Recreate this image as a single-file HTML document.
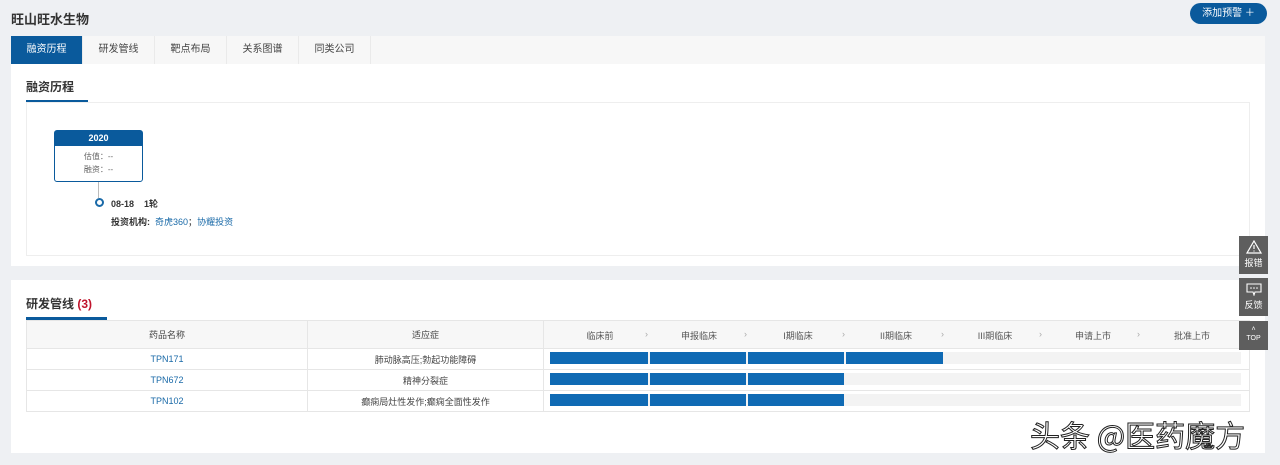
<!DOCTYPE html>
<html><head><meta charset="utf-8"><style>
*{margin:0;padding:0;box-sizing:border-box}
body{width:1280px;height:465px;background:#eef0f3;font-family:"Liberation Sans","Noto Sans CJK SC",sans-serif;font-size:10px;color:#333;position:relative;overflow:hidden}
.abs{position:absolute}
.title{left:11px;top:9px;font-size:13px;font-weight:bold;color:#333}
.card1{left:11px;top:36px;width:1254px;height:230px;background:#fff}
.tabs{left:11px;top:36px;width:1254px;height:28px;background:#f7f7f7;display:flex}
.tab{width:72px;height:28px;line-height:28px;text-align:center;font-size:10px;color:#444;border-right:1px solid #eaeaea}
.tab.on{background:#0a5a9c;color:#fff}
.sect{font-size:12px;font-weight:bold;color:#333}
.ul{height:3px;background:#0a5a9c}
.box{border:1px solid #eee}
table{border-collapse:collapse;position:absolute;left:26px;top:320px;width:1224px}
td,th{border:1px solid #e6e6e6;text-align:center;font-weight:normal;font-size:9px;color:#444}
th{height:28px;background:#f7f7f7}
td{height:21px}
a{color:#1a6aa8;text-decoration:none}
.side{left:1239px;width:29px;background:#5e5e5e;color:#fff;font-size:9px;text-align:center}
.st{position:absolute;top:329px;font-size:9px;color:#555;transform:translateX(-50%);white-space:nowrap}
.ar{position:absolute;top:329px;font-size:9px;color:#aaa}
</style></head><body>
<div class="abs title">旺山旺水生物</div>
<div class="abs" style="left:1190px;top:3px;width:77px;height:21px;border-radius:11px;background:#0a5a9c;color:#fff;font-size:10px;line-height:21px;text-align:center">添加预警 ＋</div>

<div class="abs card1"></div>
<div class="abs tabs"><div class="tab on">融资历程</div><div class="tab">研发管线</div><div class="tab">靶点布局</div><div class="tab">关系图谱</div><div class="tab">同类公司</div></div>
<div class="abs sect" style="left:26px;top:78px">融资历程</div>
<div class="abs ul" style="left:26px;top:100px;width:62px"></div>
<div class="abs box" style="left:26px;top:102px;width:1224px;height:154px"></div>
<div class="abs" style="left:54px;top:130px;width:89px;height:52px;border:1px solid #0a5a9c;border-radius:3px;background:#fff">
 <div style="background:#0a5a9c;color:#fff;height:15px;line-height:15px;text-align:center;font-weight:bold;font-size:9px">2020</div>
 <div style="text-align:center;font-size:8px;color:#666;line-height:13px;margin-top:4px">估值：--<br>融资：--</div>
</div>
<div class="abs" style="left:98px;top:182px;width:1px;height:16px;background:#bbb"></div>
<div class="abs" style="left:95px;top:198px;width:9px;height:9px;border:2px solid #1a6aa8;border-radius:50%"></div>
<div class="abs" style="left:111px;top:197px;font-size:9px;font-weight:bold">08-18 &nbsp;&nbsp; 1轮</div>
<div class="abs" style="left:111px;top:215px;font-size:9px"><b>投资机构:</b> &nbsp;<a>奇虎360</a>；<a>协耀投资</a></div>

<div class="abs" style="left:11px;top:280px;width:1254px;height:173px;background:#fff"></div>
<div class="abs sect" style="left:26px;top:295px">研发管线 <span style="color:#c0142c">(3)</span></div>
<div class="abs ul" style="left:26px;top:317px;width:81px"></div>
<table>
<tr><th style="width:281px">药品名称</th><th style="width:236px">适应症</th><th></th></tr>
<tr><td><a>TPN171</a></td><td>肺动脉高压;勃起功能障碍</td><td></td></tr>
<tr><td><a>TPN672</a></td><td>精神分裂症</td><td></td></tr>
<tr><td><a>TPN102</a></td><td>癫痫局灶性发作;癫痫全面性发作</td><td></td></tr>
</table>
<span class="st" style="left:600px">临床前</span><span class="ar" style="left:645px">›</span>
<span class="st" style="left:699px">申报临床</span><span class="ar" style="left:744px">›</span>
<span class="st" style="left:798px">I期临床</span><span class="ar" style="left:842px">›</span>
<span class="st" style="left:896px">II期临床</span><span class="ar" style="left:941px">›</span>
<span class="st" style="left:995px">III期临床</span><span class="ar" style="left:1039px">›</span>
<span class="st" style="left:1093px">申请上市</span><span class="ar" style="left:1137px">›</span>
<span class="st" style="left:1192px">批准上市</span>
<div class="abs" style="left:550px;top:352px;width:691px;height:12px;background:#f3f3f3"></div>
<div class="abs" style="left:550px;top:373px;width:691px;height:12px;background:#f3f3f3"></div>
<div class="abs" style="left:550px;top:394px;width:691px;height:12px;background:#f3f3f3"></div>
<div class="abs" style="left:550px;top:352px;width:98px;height:12px;background:#0f6ab4"></div>
<div class="abs" style="left:650px;top:352px;width:96px;height:12px;background:#0f6ab4"></div>
<div class="abs" style="left:748px;top:352px;width:96px;height:12px;background:#0f6ab4"></div>
<div class="abs" style="left:846px;top:352px;width:97px;height:12px;background:#0f6ab4"></div>
<div class="abs" style="left:550px;top:373px;width:98px;height:12px;background:#0f6ab4"></div>
<div class="abs" style="left:650px;top:373px;width:96px;height:12px;background:#0f6ab4"></div>
<div class="abs" style="left:748px;top:373px;width:96px;height:12px;background:#0f6ab4"></div>
<div class="abs" style="left:550px;top:394px;width:98px;height:12px;background:#0f6ab4"></div>
<div class="abs" style="left:650px;top:394px;width:96px;height:12px;background:#0f6ab4"></div>
<div class="abs" style="left:748px;top:394px;width:96px;height:12px;background:#0f6ab4"></div>

<div class="abs side" style="top:236px;height:38px;padding-top:4px"><svg width="16" height="14" viewBox="0 0 16 14"><path d="M8 1L15 13H1Z" fill="none" stroke="#fff" stroke-width="1.2"/><path d="M8 5v4M8 10.5v1" stroke="#fff" stroke-width="1.2"/></svg><div>报错</div></div>
<div class="abs side" style="top:278px;height:38px;padding-top:5px"><svg width="16" height="13" viewBox="0 0 16 13"><path d="M1 1h14v8H9l-1 3-1-3H1Z" fill="none" stroke="#fff" stroke-width="1.1"/><circle cx="5" cy="5" r=".8" fill="#fff"/><circle cx="8" cy="5" r=".8" fill="#fff"/><circle cx="11" cy="5" r=".8" fill="#fff"/></svg><div>反馈</div></div>
<div class="abs side" style="top:321px;height:29px;padding-top:4px;font-size:7px;line-height:9px">˄<br>TOP</div>

<div class="abs" style="left:1030px;top:412px;font-size:30px;color:#fff;-webkit-text-stroke:1px #222;font-family:'Noto Sans CJK SC',sans-serif;white-space:nowrap">头条 @医药魔方</div>
</body></html>
